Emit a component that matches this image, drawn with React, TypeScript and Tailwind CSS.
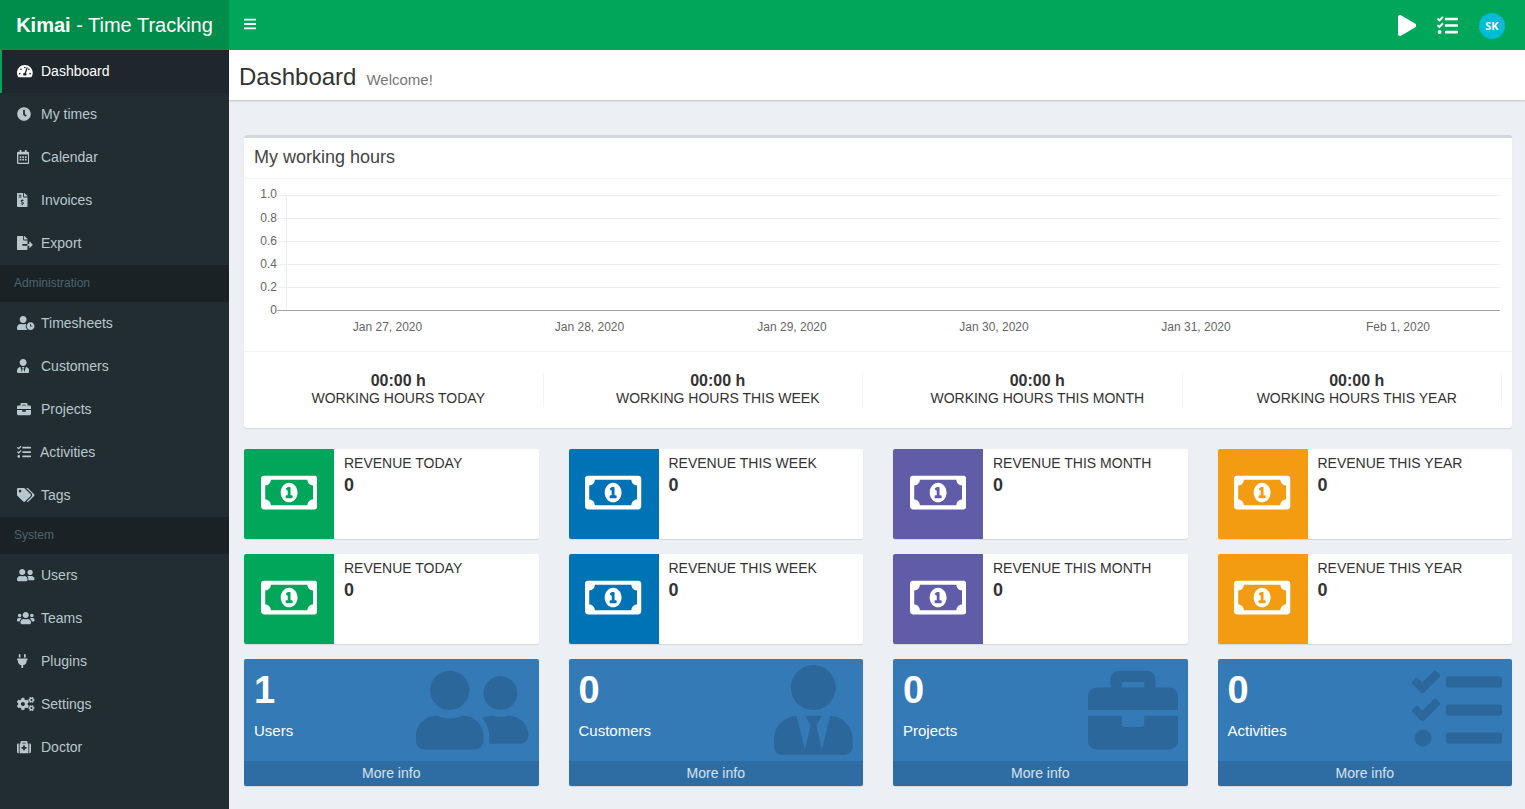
import type { IconType } from "react-icons";
import {
  FaBars,
  FaBriefcase,
  FaClock,
  FaCogs,
  FaFileExport,
  FaFileInvoiceDollar,
  FaMedkit,
  FaPlay,
  FaPlug,
  FaRegCalendarAlt,
  FaRegMoneyBillAlt,
  FaTags,
  FaTasks,
  FaTachometerAlt,
  FaUserClock,
  FaUserFriends,
  FaUserTie,
  FaUsers,
} from "react-icons/fa";

type NavItem = { label: string; icon: IconType; iconClass: string; active?: boolean; textClass?: string };

const mainNav: NavItem[] = [
  { label: "Dashboard", icon: FaTachometerAlt, iconClass: "w-[15.75px]", active: true },
  { label: "My times", icon: FaClock, iconClass: "w-[14px]" },
  { label: "Calendar", icon: FaRegCalendarAlt, iconClass: "w-[12.25px]" },
  { label: "Invoices", icon: FaFileInvoiceDollar, iconClass: "w-[10.5px]" },
  { label: "Export", icon: FaFileExport, iconClass: "w-[15.75px]" },
];

const adminNav: NavItem[] = [
  { label: "Timesheets", icon: FaUserClock, iconClass: "w-[17.5px]" },
  { label: "Customers", icon: FaUserTie, iconClass: "w-[12.25px]" },
  { label: "Projects", icon: FaBriefcase, iconClass: "w-[14px]" },
  { label: "Activities", icon: FaTasks, iconClass: "w-[14px]", textClass: "-ml-px" },
  { label: "Tags", icon: FaTags, iconClass: "w-[17.5px]" },
];

const systemNav: NavItem[] = [
  { label: "Users", icon: FaUserFriends, iconClass: "w-[17.5px]" },
  { label: "Teams", icon: FaUsers, iconClass: "w-[17.5px]" },
  { label: "Plugins", icon: FaPlug, iconClass: "w-[10.5px]" },
  { label: "Settings", icon: FaCogs, iconClass: "w-[17.5px]" },
  { label: "Doctor", icon: FaMedkit, iconClass: "w-[14px]" },
];

const hours = ["TODAY", "THIS WEEK", "THIS MONTH", "THIS YEAR"];

const revenue = [
  { label: "REVENUE TODAY", color: "bg-[#00a65a]" },
  { label: "REVENUE THIS WEEK", color: "bg-[#0073b7]" },
  { label: "REVENUE THIS MONTH", color: "bg-[#605ca8]" },
  { label: "REVENUE THIS YEAR", color: "bg-[#f39c12]" },
];

const counters = [
  { value: "1", label: "Users", icon: FaUserFriends, iconClass: "w-[112.5px]" },
  { value: "0", label: "Customers", icon: FaUserTie, iconClass: "w-[78.75px]" },
  { value: "0", label: "Projects", icon: FaBriefcase, iconClass: "w-[90px]" },
  { value: "0", label: "Activities", icon: FaTasks, iconClass: "w-[90px]" },
];

const yTicks = [
  { label: "1.0", y: 16, base: 19 },
  { label: "0.8", y: 39, base: 43 },
  { label: "0.6", y: 62, base: 66 },
  { label: "0.4", y: 85, base: 89 },
  { label: "0.2", y: 108, base: 112 },
];

const xTicks = [
  { label: "Jan 27, 2020", x: 143.5 },
  { label: "Jan 28, 2020", x: 345.5 },
  { label: "Jan 29, 2020", x: 548 },
  { label: "Jan 30, 2020", x: 750 },
  { label: "Jan 31, 2020", x: 952 },
  { label: "Feb 1, 2020", x: 1154 },
];

function NavRow({ item }: { item: NavItem }) {
  const Icon = item.icon;
  return (
    <a
      className={
        item.active
          ? "flex h-[43px] items-center border-l-2 border-[#00a65a] bg-[#1e282c] pb-[2px] pl-[15px] text-white"
          : "flex h-[43px] items-center pb-[2px] pl-[17px] text-[#b8c7ce]"
      }
    >
      <span className="flex w-[24px] shrink-0 items-center">
        <Icon className={`h-[14px] ${item.iconClass}`} />
      </span>
      <span className={item.textClass}>{item.label}</span>
    </a>
  );
}

function NavSection({ title }: { title: string }) {
  return <div className="flex h-[37px] items-center bg-[#1a2226] pb-[2px] pl-[14px] text-xs text-[#4b646f]">{title}</div>;
}

function WorkingHoursChart() {
  return (
    <svg width="1268" height="172" viewBox="0 0 1268 172" className="block" fontSize="12" fill="#666">
      {yTicks.map((t) => (
        <g key={t.label}>
          <line x1="33" x2="1256" y1={t.y + 0.5} y2={t.y + 0.5} stroke="#ededed" />
          <text x="33" y={t.base} textAnchor="end">
            {t.label}
          </text>
        </g>
      ))}
      <line x1="42.5" x2="42.5" y1="16" y2="131" stroke="#ededed" />
      <line x1="33" x2="1256" y1="131.5" y2="131.5" stroke="#a3a3a3" />
      <text x="33" y="135" textAnchor="end">
        0
      </text>
      {xTicks.map((t) => (
        <text key={t.label} x={t.x} y="152" textAnchor="middle">
          {t.label}
        </text>
      ))}
    </svg>
  );
}

export default function App() {
  return (
    <div className="flex h-[809px] w-[1525px] overflow-hidden bg-[#ecf0f5] font-['Liberation_Sans',Arial,sans-serif] text-sm text-[#333]">
      <aside className="flex w-[229px] shrink-0 flex-col bg-[#222d32]">
        <div className="flex h-[50px] items-center justify-center bg-[#008d4c] text-xl text-white">
          <b>Kimai</b>&nbsp;- Time Tracking
        </div>
        <nav>
          {mainNav.map((item) => (
            <NavRow key={item.label} item={item} />
          ))}
          <NavSection title="Administration" />
          {adminNav.map((item) => (
            <NavRow key={item.label} item={item} />
          ))}
          <NavSection title="System" />
          {systemNav.map((item) => (
            <NavRow key={item.label} item={item} />
          ))}
        </nav>
      </aside>

      <div className="flex min-w-0 flex-1 flex-col">
        <header className="flex h-[50px] shrink-0 items-center bg-[#00a65a] pl-[15px] pr-[20px] text-white">
          <FaBars className="mb-[3px] h-[14px] w-[12.25px]" />
          <div className="ml-auto flex items-center">
            <FaPlay className="h-[21px] w-[18.4px]" />
            <FaTasks className="ml-[21px] h-[21px] w-[21px]" />
            <span className="ml-[21px] mt-[2px] flex h-[26px] w-[26px] items-center justify-center rounded-full bg-[#00bcd4] font-['Open_Sans',sans-serif] text-[11px] font-bold">
              SK
            </span>
          </div>
        </header>

        <div className="flex h-[50px] shrink-0 items-center bg-white pl-[10px] shadow-[0_1px_2px_rgba(0,0,0,0.2)]">
          <h1 className="mt-[4px] text-2xl">Dashboard</h1>
          <small className="ml-[10px] mt-[10px] text-[15px] text-[#777]">Welcome!</small>
        </div>

        <main className="flex flex-col pl-[15px] pr-[13px] pt-[35px]">
          <section className="rounded-[3px] border-t-[3px] border-[#d2d6de] bg-white shadow-[0_1px_1px_rgba(0,0,0,0.1)]">
            <h3 className="flex h-[41px] items-center border-b border-[#f4f4f4] pb-[2px] pl-[10px] text-lg text-[#444]">
              My working hours
            </h3>
            <WorkingHoursChart />
            <div className="grid grid-cols-4 gap-[30px] border-t border-[#f4f4f4] px-[10px] py-[21px]">
              {hours.map((h) => (
                <div key={h} className="border-r border-[#f4f4f4] text-center">
                  <div className="-mt-px text-base leading-[18px] font-bold">00:00 h</div>
                  <div className="leading-[17px]">WORKING HOURS {h}</div>
                </div>
              ))}
            </div>
          </section>

          <div className="mt-[21px] grid grid-cols-4 gap-x-[30px] gap-y-[15px]">
            {[...revenue, ...revenue].map((r, i) => (
              <div key={i} className="flex h-[90px] overflow-hidden rounded-[2px] bg-white shadow-[0_1px_1px_rgba(0,0,0,0.1)]">
                <div className={`flex w-[90px] shrink-0 items-center justify-center pb-[4px] text-white ${r.color}`}>
                  <FaRegMoneyBillAlt className="h-[45px] w-[56.25px]" />
                </div>
                <div className="px-[10px] py-[5px]">
                  <div className="leading-[18px]">{r.label}</div>
                  <div className="mt-[3px] text-lg leading-[20px] font-bold">0</div>
                </div>
              </div>
            ))}

            {counters.map((c) => {
              const Icon = c.icon;
              return (
                <div key={c.label} className="relative overflow-hidden rounded-[2px] bg-[#337ab7] text-white shadow-[0_1px_1px_rgba(0,0,0,0.1)]">
                  <div className="p-[10px]">
                    <div className="mb-[10px] text-[38px] leading-[42px] font-bold">{c.value}</div>
                    <div className="mb-[10px] text-[15px] leading-[20px]">{c.label}</div>
                  </div>
                  <Icon className={`absolute right-[10px] top-[6px] h-[90px] text-black/15 ${c.iconClass}`} />
                  <div className="h-[25px] bg-black/10 text-center leading-[25px] text-white/80">More info</div>
                </div>
              );
            })}
          </div>
        </main>
      </div>
    </div>
  );
}
